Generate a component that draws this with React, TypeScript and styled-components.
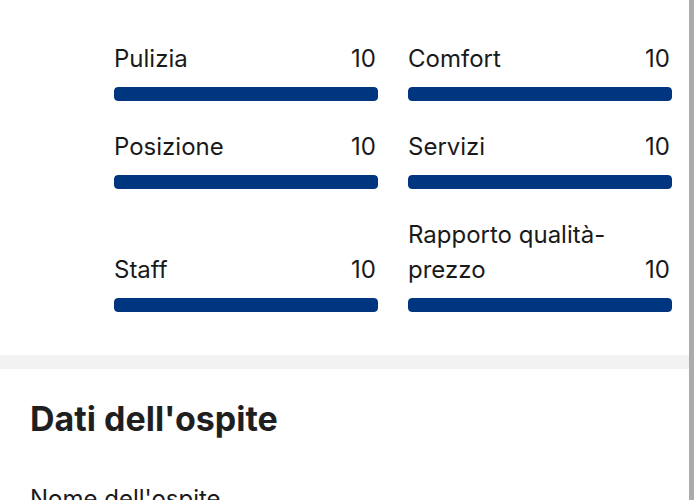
import styled, { createGlobalStyle } from "styled-components";

const GlobalStyle = createGlobalStyle`
  body {
    margin: 0;
    background: #ffffff;
    font-family: Inter, "Noto Sans", "Liberation Sans", sans-serif;
    color: #1a1a1a;
  }
`;

interface Rating {
  label: string;
  score: number;
}

const ratings: Rating[] = [
  { label: "Pulizia", score: 10 },
  { label: "Comfort", score: 10 },
  { label: "Posizione", score: 10 },
  { label: "Servizi", score: 10 },
  { label: "Staff", score: 10 },
  { label: "Rapporto qualità-prezzo", score: 10 },
];

const App = (): JSX.Element => {
  return (
    <>
      <GlobalStyle />
      <Page>
        <Content>
          <RatingsSection>
            <Grid>
              {ratings.map((r) => (
                <Cell key={r.label}>
                  <LabelRow>
                    <Label>{r.label}</Label>
                    <Score>{r.score}</Score>
                  </LabelRow>
                  <Track>
                    <Fill style={{ width: `${(r.score / 10) * 100}%` }} />
                  </Track>
                </Cell>
              ))}
            </Grid>
          </RatingsSection>
          <Divider />
          <GuestSection>
            <Heading>Dati dell'ospite</Heading>
            <FieldLabel>Nome dell'ospite</FieldLabel>
          </GuestSection>
        </Content>
        <Rail />
      </Page>
    </>
  );
};

export default App;

const Page = styled.div`
  display: flex;
  height: 500px;
  overflow: hidden;
`;

const Content = styled.main`
  width: 689px;
  flex: none;
`;

const Rail = styled.div`
  width: 5px;
  flex: none;
  background: #ababab;
`;

const RatingsSection = styled.section`
  padding: 41px 17px 43px 114px;
`;

const Grid = styled.div`
  display: grid;
  grid-template-columns: 1fr 1fr;
  column-gap: 30px;
  row-gap: 28px;
`;

const Cell = styled.div`
  display: flex;
  flex-direction: column;
  justify-content: flex-end;
`;

const LabelRow = styled.div`
  display: flex;
  align-items: flex-end;
  justify-content: space-between;
  font-size: 24px;
  line-height: 35px;
`;

const Label = styled.span`
  flex: 1;
  min-width: 0;
`;

const Score = styled.span`
  flex: none;
  margin-left: 12px;
  margin-right: 2px;
`;

const Track = styled.div`
  height: 14px;
  margin-top: 11px;
  border-radius: 4px;
  background: #e6e6e6;
  overflow: hidden;
`;

const Fill = styled.div`
  height: 100%;
  border-radius: 4px;
  background: #003580;
`;

const Divider = styled.div`
  height: 14px;
  background: #f2f2f2;
`;

const GuestSection = styled.section`
  padding: 30px 30px 0 30px;
`;

const Heading = styled.h2`
  margin: 0;
  font-size: 34px;
  line-height: 40px;
  font-weight: 700;
  color: #1f1f1f;
`;

const FieldLabel = styled.div`
  margin-top: 42px;
  font-size: 24px;
  line-height: 35px;
`;
